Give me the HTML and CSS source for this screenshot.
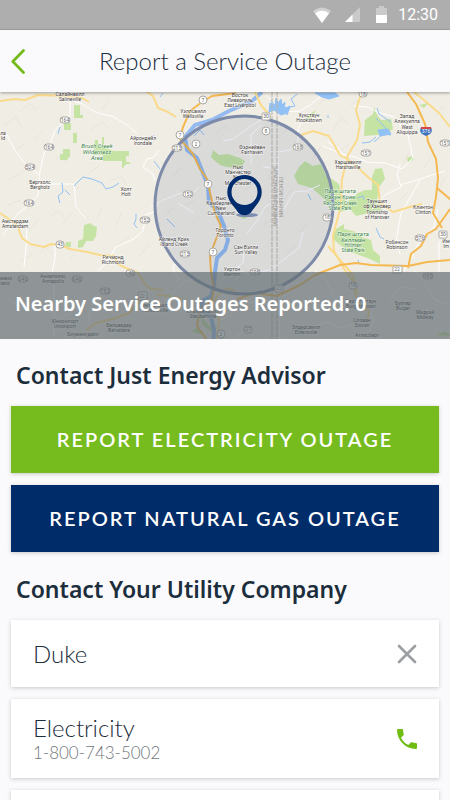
FILE: index.html
```html
<!DOCTYPE html>
<html lang="en">
<head>
<meta charset="utf-8">
<meta name="viewport" content="width=device-width, initial-scale=1">
<title>Report a Service Outage</title>
<link rel="stylesheet" href="styles.css">
</head>
<body>
<div class="status">
  <svg class="wifi" width="18" height="16" viewBox="0 0 18 16" aria-hidden="true"><path d="M0 4Q9-3 18 4L9 16Z" fill="#d0d0d0"/><path d="M2 6.200Q9 1.500 16 6.200L9 16Z" fill="#fff"/></svg>
  <svg class="signal" width="15" height="15" viewBox="0 0 15 15" aria-hidden="true"><path d="M15 0V15H0Z" fill="#cacaca"/><path d="M7.500 7.500V15H0Z" fill="#fff"/></svg>
  <svg class="battery" width="11" height="17" viewBox="0 0 11 17" aria-hidden="true"><path d="M3 0H8V2H10Q11 2 11 3V16Q11 17 10 17H1Q0 17 0 16V3Q0 2 1 2H3Z" fill="#cacaca"/><path d="M0 9H11V16Q11 17 10 17H1Q0 17 0 16Z" fill="#fff"/></svg>
  <span>12:30</span>
</div>
<header class="header">
  <button class="back" aria-label="Back"><svg width="14" height="25" viewBox="0 0 14 25" aria-hidden="true"><path d="M12.500 1.500L1.800 12.500L12.500 23.500" fill="none" stroke="#73ba18" stroke-width="2.700" stroke-linecap="round" stroke-linejoin="round"/></svg></button>
  <h1>Report a Service Outage</h1>
</header>
<main>
<section class="map" aria-label="Outage map">
<svg class="map-art" viewBox="0 92 450 247" preserveAspectRatio="xMidYMid slice">
  <rect x="0" y="92" width="450" height="247" fill="#f0ede4"/>
  <g class="relief">
    <path d="M4 125l12-8 5 10M8 180l14-7M20 112l9-9 8 7M35 140l8-9M55 160l7-6 5 9M14 152l10-8M64 190l9-8 6 8M90 130l12-8 8 8M102 110l6-9M88 174l12-9M110 181l12-5 4 9M125 162l8-8M8 205l13-5M30 230l9-12M50 217l8-6 6 6M62 225l9-12M80 210l8 9M97 218l5-12M115 226l7-14M120 243l10-7M20 261l12-6M39 255l6-8 8 7M70 260l6-10M140 256l9-13M8 310l13-9M30 322l12-12M52 305l11-9M84 308l10-10M115 309l8-9M150 325l10-9"/>
    <path d="M172 176l10-9M190 225l8-8M166 214l8-7M184 206l10-5M215 135l9-9 7 4M228 160l12-11M245 190l12-9M268 180l6-14M284 200l8-11M282 134l9-8M263 225l14-9M270 244l9-12M286 255l10-11M300 232l8-9M312 160l8-12M333 130l8-13 7 7M350 105l11-7M340 151l10-8M374 180l9-7M385 167l8-9M403 163l7-12M424 168l7-11M438 190l7-13M400 200l8-8M435 116l9-10M410 100l9-6M290 100l9-6M319 104l8-7M240 310l12-8M286 313l8-11M325 294l10-9M388 291l8-9M409 328l11-9M438 305l8-8"/>
  </g>
  <g class="park">
    <path d="M74 105h6v10h3v3h-9zM64 123h7v7h-7zM73 133h4v10h-4zM63 149h7v7l-3 4h-7v-6h3zM95 140h3v5h4v-8h2v10l9 4h16v5h-3v6h4v2h-4l-3 4h-1v-7h-19v-6h-10zM66 242h5v5h-6zM84 225l7-2 1 2 5 2-1 9-3 5h-7l-3 6-5 1v-7l5-2z"/>
    <path d="M211 157l2-7 6 5 9-1 12 4 5 3-4 7-14-1-7-2-6-5zM299 167l6-6 8 5 8-2 5 11 13 9 3 13-12 8-9-9-9-8-14-4-4-8zM365 120l8-6 1-7 3 8 4 5 10-1 2 10-7 5-22 2zM307 116l9-6-3 6-6 5zM334 200l8-4 5 6 11-9 7-3h7v-13l3-8 7-1 3 11-6 8-2 13 5 10-14 3-12 3-6-7-10 3-7-7zM336 229l8-5v5l12 3 6 5 9 3 2 10 7 6v8l-10-5-19-7-11-7-8-7zM419 105l9-2-4 5zM407 158l5-2 2 3-6 4zM236 215h16l-8 4zM200 314l7 10 9 6-5 2-9-8zM436 335l9-4 6 5zM191 331l8-4 3 8z"/>
  </g>
  <g class="minor-road">
    <path d="M70 101v14l-5 6-10 9-6 17-5 6-4 18-2 24-9 10-12 9-6 10-8 11M0 132l7 3 7 14 12 16 14 10M38 184h36l2 23 11 12M73 101l9 3 13 8 19 5 15 9 8 8M159 150l-6 8-6 1-4 8 10 7 2 7M158 204l-4 8-9 3M145 220l-2 11-9 8-18 8-9 15-9 9M26 225l1 13-3 29M55 244v15l-3 14M103 291l-10 7-5 25M10 300l16 11 19-3 14 10 11-5M54 284v52M303 118l-5 12v15l-8 5-12 2v75M251 165v-30l10-10M278 169l-15-2M151 207l12-7 18-7 9 3 9-9M178 203l16 10M166 249l10 10-3 10 6 11M166 300l18-18 20-6M237 281l-2-12 8-6 1-10M285 195l-20 12-8 14-10 12M266 117l-15 9-18 13-10 2"/>
    <path d="M324 94l-14 11-10 6-18 1-16-17M354 106l14 1 9 5 17 5 14 18 5 23-11 11-17-6-18-1-12-5-13-3-19-8M400 164l-3 11 4 12-16 8-13 14M400 185l17-5 15-5 13-4M420 180l-6 11-13 22-5 28 4 13M438 209l-4 18-14 13-8 17-8 14M320 185l-13 6-13 1-10 17M303 232l-4 16-17 13-12 9-20 4-19-6M328 142l11 7 7 11M315 270l12 11 5 13 8 11 21-3 13 17-6 17M414 270l9 10 11 19 15 6M439 241v31M389 301l11-14 15 2M210 325l21-10 5-11 18-2 10-13M247 330l-14 8M278 289l2 50M309 330l17-8 15 6 20-6"/>
  </g>
  <g class="river">
    <path d="M262 92l-10 9-23 10-17 9-17 5-10 12 2 13 10 8 6 15 5 13 1 17 7 5 4 8 4 10 4 14-3 10-8 8-2 14-1 14-3 10-9 5-1 8 10 8 3 13-1 17" class="wide"/>
    <path d="M60 127l-2 7M62 183l1 9-5 4 2 7M65 190l5 5M74 186l9-9 9 2 10 4 4 6 7-2 6-4M136 214v5l-2 5 3 4M154 135l-4 4M175 227l-8-8M154 161l6 8M204 135l-4-5-6 6M163 93l-3 4M328 115v3M391 122l-12-8-2-6M374 142l9-8 8 1M391 134l-15-16M376 228l4 9 4 2M358 260l1 3M308 194l3 6M357 198l6-2 1 4M376 137l-6 5-8 1M271 100l4 6 4-2 2 6 5-3 1 8 3-8 5-1-4-7 6-5"/>
    <path d="M270 103l5 2 1-7 2 5 3-4 1 6 3-3-1 7 6-3-3 7-6 2-7-5-5 2z" fill="#92c1f5"/>
    <path d="M315 93h20l4 3-10 3-7-2zM378 130l10-1 3 5-11 2z" fill="#92c1f5"/>
  </g>
  <g class="road">
    <path d="M0 101l14-2 11 1 13-5 29 1 15 2 7 4M147 92l6 4 5 12 10 4 8 5M0 213l9 6 8 6 5 13 8 6 14 3 7-3 9 1 10 4 17 3 13 3 14 1 4 8 8 4 12 5 7 11 6 5 12 1M86 330l10-7 20-5 13-5 10-12 7-6M156 295l13 1 12 3M361 94l-5 16 4 15-3 15-9 15-6 24-1 26-8 31 1 15 10 18 8 11 6 23 11 8-2 13M301 135l12-4 16 5 11 19 12 7 17 16 9 7 2 18 13 9 20-6 9-2M414 92l10 8 15 13 11 14M146 92l-1-2"/>
    <path d="M255 92l6 13 9 11M235 291l-9-3-9 8-3 9 5 15-2 19M328 246l25 29 4 18"/>
    <path class="highway" d="M236 93l-24 3-10 6-12 9-7 16-3 12 13 15 7 15 7 10 4 18 4 16 6 13-6 16-5 13 1 18 3 15-2 12-12 10-3 16 10 14 5 15M300 285l15-10 25-10 16-2 15 2 37 1 19-4 23-2M300 285l-23 11-21-3-19 6M407 92l9 12 9 20 3 18 8 17 2 19-2 19-3 16 9 15M437 188l14 12M450 209l-14 20-9 5-6 12-10 8-3 14"/>
  </g>
  <g class="border"><path d="M272 92V339M277 92V339M272 215h5"/></g>
  <circle class="radius" cx="244" cy="205" r="89"/>
  <g class="label">
    <text x="70" y="96">Салайнвилл</text><text x="70" y="101">Salineville</text>
    <text x="143" y="140">Айрондейл</text><text x="143" y="145">Irondale</text>
    <text x="40" y="184">Бергхолс</text><text x="40" y="189">Bergholz</text>
    <text x="126" y="191">Холт</text><text x="126" y="196">Holt</text>
    <text x="3" y="135">ла</text><text x="3" y="140">ld</text>
    <text x="240" y="97">Восток</text><text x="240" y="102">Ливерпуль</text><text x="240" y="107">East Liverpool</text>
    <text x="193" y="113">Уэллсвилл</text><text x="193" y="118">Wellsville</text>
    <text x="252" y="149">Фэрнейвен</text><text x="252" y="154">Fairhaven</text>
    <text x="238" y="169">Нью</text><text x="238" y="174">Манчестер</text><text x="238" y="179">New</text><text x="238" y="185">Manchester</text>
    <text x="221" y="200">Нью</text><text x="221" y="205">Камберленд</text><text x="221" y="210">New</text><text x="221" y="215">Cumberland</text>
    <text x="309" y="117">Хукстаун</text><text x="309" y="122">Hookstown</text>
    <text x="407" y="118">Запад</text><text x="407" y="123">Аликуиппа</text><text x="407" y="129">West</text><text x="407" y="134">Aliquippa</text>
    <text x="348" y="164">Харшавилл</text><text x="348" y="169">Harshaville</text>
    <text x="377" y="203">Тауншип</text><text x="377" y="208">оф Хановер</text><text x="377" y="214">Township</text><text x="377" y="219">of Hanover</text>
    <text x="423" y="209">Клинтон</text><text x="423" y="214">Clinton</text>
    <text x="15" y="223">Амстердам</text><text x="15" y="228">Amsterdam</text>
    <text x="113" y="259">Ричмонд</text><text x="113" y="264">Richmond</text>
    <text x="53" y="278">Аннаполис</text><text x="53" y="283">Annapolis</text>
    <text x="6" y="280">мано</text><text x="5" y="285">iano</text>
    <text x="65" y="323">Юнионпорт</text><text x="65" y="328">Unionport</text>
    <text x="83" y="336">Блумингдейл</text>
    <text x="119" y="327">Бельведер</text><text x="119" y="332">Belvedere</text>
    <text x="155" y="307">Уинтерсвилл</text><text x="155" y="312">Wintersville</text>
    <text x="203" y="313">Стьюбенвилл</text><text x="203" y="318">Steubenville</text>
    <text x="174" y="241">Айленд Крик</text><text x="174" y="246">Island Creek</text>
    <text x="225" y="232">Торонто</text><text x="225" y="237">Toronto</text>
    <text x="246" y="249">Сан Вэлли</text><text x="246" y="254">Sun Valley</text>
    <text x="232" y="271">Уиртон</text><text x="232" y="276">Weirton</text>
    <text x="306" y="329">Элдерсвилл</text><text x="306" y="334">Eldersville</text>
    <text x="397" y="244">Робинсон</text><text x="397" y="249">Robinson</text>
    <text x="361" y="303">Бергеттстаун</text><text x="361" y="308">Burgettstown</text>
    <text x="403" y="305">Булгер</text><text x="403" y="310">Bulger</text>
    <text x="425" y="314">Мидуэй</text><text x="425" y="319">Midway</text>
    <text x="362" y="322">Слован</text><text x="362" y="327">Slovan</text><text x="367" y="337">Атласберг</text>
    <text x="446" y="243">Им</text><text x="446" y="248">Im</text>
  </g>
  <g class="label park-label">
    <text x="97" y="148">Brush Creek</text><text x="97" y="154">Wilderness</text><text x="97" y="160">Area</text>
    <text x="340" y="193">Парк штата</text><text x="340" y="199">Ракун Крик</text><text class="small" x="340" y="205">Raccoon Creek</text><text class="small" x="340" y="210">State Park</text>
    <text x="353" y="236">Парк штата</text><text x="353" y="242">Хиллман</text><text class="small" x="353" y="247">Hillman</text><text class="small" x="353" y="252">State Park</text>
  </g>
  <g class="state-label">
    <text transform="translate(273 166) rotate(90)">ЗАПАДНАЯ ВИРДЖИНИЯ</text>
    <text transform="translate(279 177) rotate(90)">ПЕНСИЛЬВАНИЯ</text>
  </g>
  <g class="shield">
    <rect x="60" y="117" width="10" height="6" rx="3"/><rect x="44" y="144" width="10" height="6" rx="3"/><rect x="25" y="164" width="10" height="6" rx="3"/><rect x="24" y="200" width="10" height="6" rx="3"/><rect x="56" y="241" width="8" height="7" rx="3"/><rect x="140" y="217" width="10" height="6" rx="3"/><rect x="126" y="270" width="9" height="6" rx="3"/><rect x="18" y="276" width="10" height="6" rx="3"/><rect x="72" y="276" width="10" height="6" rx="3"/><rect x="100" y="288" width="10" height="6" rx="3"/><rect x="138" y="292" width="9" height="8" rx="1"/>
    <circle cx="203" cy="100" r="4"/><circle cx="180" cy="135" r="4"/><circle cx="196" cy="144" r="4"/><circle cx="208" cy="184" r="4"/><circle cx="213" cy="252" r="4"/><circle cx="266" cy="131" r="4"/>
    <rect x="183" y="191" width="10" height="6" rx="3"/><rect x="172" y="145" width="10" height="6" rx="3"/><rect x="262" y="113" width="8" height="7" rx="1"/><rect x="293" y="144" width="10" height="6" rx="3"/><rect x="359" y="90" width="8" height="7" rx="3"/><rect x="361" y="150" width="10" height="6" rx="3"/><rect x="440" y="140" width="10" height="6" rx="3"/><rect x="323" y="214" width="8" height="7" rx="3"/><rect x="415" y="235" width="10" height="6" rx="3"/><rect x="439" y="231" width="8" height="7" rx="1"/><rect x="393" y="266" width="9" height="7" rx="1"/><rect x="423" y="273" width="10" height="6" rx="3"/><rect x="349" y="282" width="8" height="7" rx="3"/><rect x="180" y="251" width="10" height="6" rx="3"/><rect x="250" y="269" width="10" height="6" rx="3"/><rect x="275" y="285" width="8" height="7" rx="1"/><rect x="244" y="326" width="8" height="7" rx="3"/><circle cx="221" cy="334" r="4"/>
  </g>
  <g class="number">
    <text x="65" y="122">164</text><text x="49" y="149">164</text><text x="30" y="169">524</text><text x="29" y="205">164</text><text x="60" y="246">43</text><text x="145" y="222">152</text><text x="131" y="275">43</text><text x="23" y="281">646</text><text x="77" y="281">646</text><text x="105" y="293">152</text><text x="142" y="298">22</text><text x="203" y="102">7</text><text x="180" y="137">7</text><text x="196" y="146">2</text><text x="208" y="186">7</text><text x="213" y="254">7</text><text x="266" y="133">8</text><text x="188" y="196">152</text><text x="177" y="150">213</text><text x="266" y="118">30</text><text x="298" y="149">168</text><text x="363" y="96">18</text><text x="366" y="155">151</text><text x="445" y="145">151</text><text x="327" y="219">18</text><text x="420" y="240">576</text><text x="443" y="236">30</text><text x="397" y="271">22</text><text x="428" y="278">980</text><text x="353" y="287">18</text><text x="185" y="256">213</text><text x="255" y="274">105</text><text x="279" y="290">22</text><text x="248" y="331">27</text><text x="221" y="336">2</text>
  </g>
  <g><path d="M421 127h10q2 5-1 7l-4 2-4-2q-3-2-1-7z" fill="#3e71bc"/><path d="M421 127h10v2h-10z" fill="#d8444c"/><text class="interstate" x="426" y="133">376</text></g>
  <ellipse cx="247" cy="215" rx="11" ry="2" fill="#7d8eb2"/>
  <path fill="#002c6d" fill-rule="evenodd" d="M244.500 175a17.200 17.200 0 0 1 17.200 17.200c0 9-7 14-11 20.500q-6 5-12.400 0c-4-6.500-11-11.500-11-20.500A17.200 17.200 0 0 1 244.500 175zm0 4a13 13 0 1 0 0 26 13 13 0 1 0 0-26z"/>
</svg>
<p class="map-caption">Nearby Service Outages Reported: 0</p>
</section>
<section class="contact">
  <h2>Contact Just Energy Advisor</h2>
  <div class="stack">
    <button class="action green">REPORT ELECTRICITY OUTAGE</button>
    <button class="action navy">REPORT NATURAL GAS OUTAGE</button>
  </div>
</section>
<section class="contact">
  <h2>Contact Your Utility Company</h2>
  <div class="stack">
    <div class="card">
      <input type="text" aria-label="Utility company" value="Duke">
      <button class="clear" aria-label="Clear"><svg width="20" height="20" viewBox="0 0 20 20" aria-hidden="true"><path d="M2 2L18 18M18 2L2 18" stroke="#9c9fa3" stroke-width="2.700" stroke-linecap="round"/></svg></button>
    </div>
    <a class="card phone" href="tel:18007435002">
      <span><span class="name">Electricity</span><span class="digits">1-800-743-5002</span></span>
      <svg width="20" height="20" viewBox="3 3 18 18" aria-hidden="true"><path fill="#6fbc12" d="M6.620 10.790c1.440 2.830 3.760 5.140 6.590 6.590l2.200-2.200c.27-.27.67-.36 1.020-.24 1.120.37 2.330.57 3.570.57.550 0 1 .45 1 1V20c0 .55-.45 1-1 1-9.390 0-17-7.610-17-17 0-.55.45-1 1-1h3.500c.55 0 1 .45 1 1 0 1.250.2 2.450.57 3.570.11.35.03.74-.25 1.020l-2.200 2.200z"/></svg>
    </a>
    <div class="card phone"></div>
  </div>
</section>
</main>
</body>
</html>
```
FILE: styles.css
```css
* { box-sizing: border-box; }
html { overflow: hidden; }
body {
  margin: 0;
  height: 100vh;
  overflow: hidden;
  background: #fafafc;
  color: #1c2d3c;
  font-family: Lato, "Open Sans", sans-serif;
}
h1, h2, p { margin: 0; }
button { border: 0; padding: 0; font: inherit; cursor: pointer; }
svg { display: block; flex: none; }

.status {
  display: flex;
  align-items: center;
  justify-content: flex-end;
  height: 30px;
  padding-right: 12px;
  background: #aeaeae;
  border-bottom: 1px solid #a4a4a4;
  color: #fff;
  font: 16px/30px Roboto, sans-serif;
}
.signal { margin-left: 14px; }
.battery { margin: 0 11px 0 16px; }

.header {
  position: relative;
  z-index: 1;
  display: grid;
  grid-template-columns: 36px 1fr 36px;
  align-items: center;
  height: 62px;
  background: #fafafc;
  box-shadow: 0 1px 3px rgba(0, 0, 0, .35);
}
.back { display: flex; padding: 0 0 0 11px; background: none; }
h1 { text-align: center; font-size: 24px; line-height: 30px; font-weight: 300; white-space: nowrap; }

.map { position: relative; overflow: hidden; }
.map-art { width: 100%; height: auto; font-family: Roboto, sans-serif; }
.map-caption {
  position: absolute;
  inset: auto 0 0;
  padding: 18px 15px 22px;
  background: rgba(98, 108, 113, .68);
  color: #fff;
  font-family: "Noto Sans", sans-serif;
  font-size: 20px;
  line-height: 27px;
  font-weight: 600;
}
.relief { fill: none; stroke: #e9e5db; stroke-width: 1; }
.park { fill: #c5e3a2; }
.minor-road { fill: none; stroke: #fff; stroke-width: 1; }
.river { fill: none; stroke: #92c1f5; stroke-width: 1; }
.river .wide { stroke-width: 4; stroke: #94baf0; }
.road { fill: none; stroke: #fadb8b; stroke-width: 2; stroke-linejoin: round; }
.road .highway { stroke: #f5b951; }
.border { fill: none; stroke: #b7b5b0; stroke-width: 1; stroke-dasharray: 5 1; }
.radius { fill: rgba(0, 38, 110, .09); stroke: #7d8ba9; stroke-width: 3; }
.label text {
  font-size: 5px;
  text-anchor: middle;
  fill: #45423e;
  stroke: #fff;
  stroke-width: 1px;
  stroke-opacity: .7;
  paint-order: stroke;
}
.label.park-label text { fill: #39834a; font-size: 6px; font-style: italic; }
.label.park-label .small { font-size: 5px; font-style: normal; }
.state-label { font-size: 5px; fill: #96938e; }
.shield { fill: #fff; stroke: #aaa8a3; stroke-width: 1; }
.number { font-size: 5px; fill: #666; text-anchor: middle; }
.interstate { font-size: 5px; fill: #fff; text-anchor: middle; }

.contact { padding: 19px 11px 0; }
h2 { padding: 0 5px; font-family: "Noto Sans", sans-serif; font-size: 23px; line-height: 34px; font-weight: 600; }
.stack { display: grid; gap: 12px; padding-top: 14px; }
.action {
  min-height: 67px;
  padding-bottom: 2px;
  color: #fff;
  font-size: 20px;
  line-height: 24px;
  font-weight: 600;
  letter-spacing: 2px;
  box-shadow: 0 1px 4px rgba(0, 0, 0, .2);
}
.green { background: #76bc1f; }
.navy { background: #002c69; }
.contact + .contact { padding-top: 20px; }
.card {
  display: flex;
  align-items: center;
  justify-content: space-between;
  min-height: 67px;
  padding: 0 22px;
  background: #fff;
  color: inherit;
  text-decoration: none;
  box-shadow: 0 1px 4px rgba(0, 0, 0, .2);
}
.card input {
  flex: 1;
  min-width: 0;
  padding: 0;
  border: 0;
  background: none;
  color: inherit;
  font: 300 24px/30px Lato, "Open Sans", sans-serif;
}
.clear { background: none; }
.phone { min-height: 79px; }
.name, .digits { display: block; }
.name { font-size: 24px; line-height: 28px; font-weight: 300; }
.digits { color: #71777d; font-size: 17px; line-height: 22px; font-weight: 300; }
```
